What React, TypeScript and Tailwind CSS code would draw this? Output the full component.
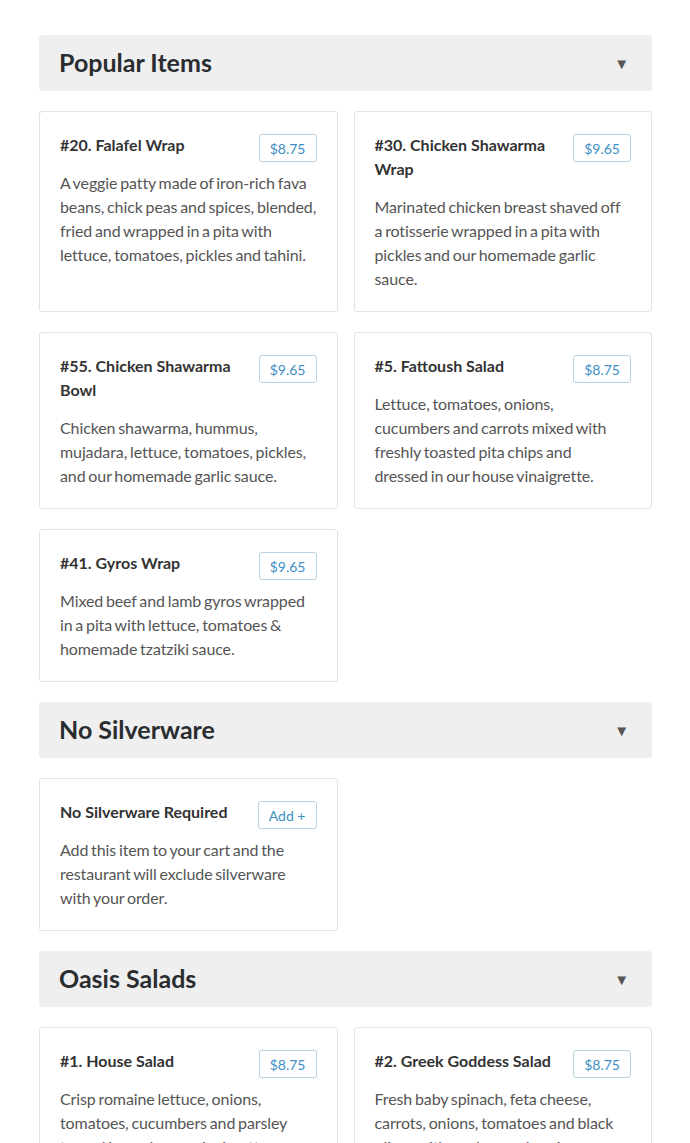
const POPULAR = [
  {
    name: "#20. Falafel Wrap",
    price: "$8.75",
    desc: "A veggie patty made of iron-rich fava beans, chick peas and spices, blended, fried and wrapped in a pita with lettuce, tomatoes, pickles and tahini.",
  },
  {
    name: "#30. Chicken Shawarma Wrap",
    price: "$9.65",
    desc: "Marinated chicken breast shaved off a\u00a0rotisserie wrapped in a pita with pickles and our homemade garlic sauce.",
  },
  {
    name: "#55. Chicken Shawarma Bowl",
    price: "$9.65",
    desc: "Chicken shawarma, hummus, mujadara, lettuce, tomatoes, pickles, and our homemade garlic sauce.",
  },
  {
    name: "#5. Fattoush Salad",
    price: "$8.75",
    desc: "Lettuce, tomatoes, onions, cucumbers and carrots mixed with freshly toasted pita chips and dressed\u00a0in our house vinaigrette.",
  },
  {
    name: "#41. Gyros Wrap",
    price: "$9.65",
    desc: "Mixed beef and lamb gyros wrapped in a pita with lettuce, tomatoes & homemade tzatziki sauce.",
  },
];

const SILVERWARE = [
  {
    name: "No Silverware Required",
    price: "Add +",
    desc: "Add this item to your cart and the restaurant will exclude silverware with your order.",
  },
];

const SALADS = [
  {
    name: "#1. House Salad",
    price: "$8.75",
    desc: "Crisp romaine lettuce, onions, tomatoes, cucumbers and parsley tossed in our house vinaigrette.",
  },
  {
    name: "#2. Greek Goddess Salad",
    price: "$8.75",
    desc: "Fresh baby spinach, feta cheese, carrots, onions, tomatoes and black olives with our house dressing.",
  },
];

type Item = { name: string; price: string; desc: string };

const SectionHeader = ({ title }: { title: string }) => (
  <div className="flex items-center justify-between h-14 pl-5 pr-[23px] rounded-[3px] bg-[#efefef]">
    <h2 className="text-[25px] font-bold text-[#2a2d30]">{title}</h2>
    <span className="text-[15px] text-[#555]">▼</span>
  </div>
);

const ItemCard = ({ item }: { item: Item }) => (
  <div className="px-5 pt-[21px] pb-5 bg-white border border-[#e3e3e3] rounded-[3px]">
    <div className="flex items-start justify-between gap-4 mb-3.5">
      <h3 className="text-[16px] leading-6 font-bold text-[#333]">{item.name}</h3>
      <button className="shrink-0 h-7 mt-px -mb-[5px] px-2.5 text-[14px] text-[#3d8fc6] border border-[#b9d2e0] rounded-[3px] bg-white">
        {item.price}
      </button>
    </div>
    <p className="text-[16px] leading-6 text-[#555] tracking-[-0.1px] [word-spacing:-1.2px]">{item.desc}</p>
  </div>
);

const Section = ({ title, items }: { title: string; items: Item[] }) => (
  <section className="flex flex-col gap-5">
    <SectionHeader title={title} />
    <div className="grid grid-cols-2 gap-x-4 gap-y-5">
      {items.map((item) => (
        <ItemCard key={item.name} item={item} />
      ))}
    </div>
  </section>
);

export default function App() {
  return (
    <div
      className="min-h-screen bg-white pt-[35px] pl-[39px] pr-[38px] pb-10"
      style={{ fontFamily: "Lato, 'Liberation Sans', sans-serif" }}
    >
      <div className="flex flex-col gap-5">
        <Section title="Popular Items" items={POPULAR} />
        <Section title="No Silverware" items={SILVERWARE} />
        <Section title="Oasis Salads" items={SALADS} />
      </div>
    </div>
  );
}
